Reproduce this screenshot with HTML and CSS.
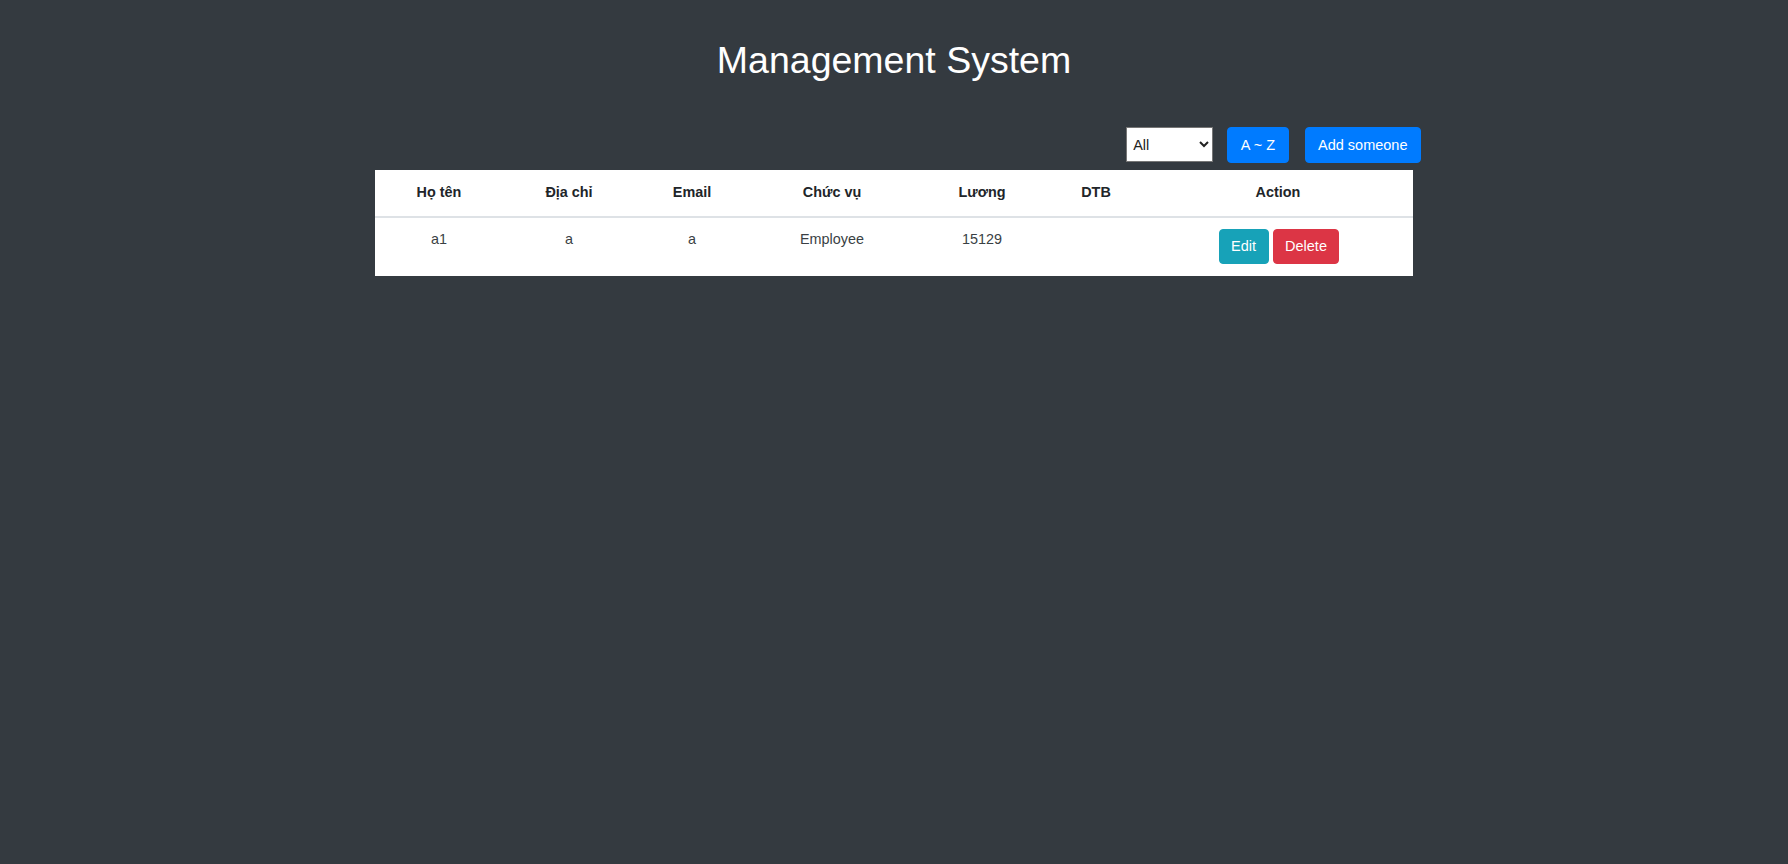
FILE: index.html
```html
<!DOCTYPE html>
<html lang="vi">
<head>
<meta charset="utf-8">
<title>Management System</title>
<link rel="stylesheet" href="styles.css">
</head>
<body>
  <div class="page">
    <h1 class="title">Management System</h1>
    <div class="panel">
      <div class="toolbar">
        <select class="filter">
          <option>All</option>
          <option>Employee</option>
          <option>Manager</option>
        </select>
        <button class="btn btn-primary">A ~ Z</button>
        <button class="btn btn-primary">Add someone</button>
      </div>
      <table class="staff">
        <thead>
          <tr>
            <th class="c1">Họ tên</th>
            <th class="c2">Địa chỉ</th>
            <th class="c3">Email</th>
            <th class="c4">Chức vụ</th>
            <th class="c5">Lương</th>
            <th class="c6">DTB</th>
            <th class="c7">Action</th>
          </tr>
        </thead>
        <tbody>
          <tr>
            <td>a1</td>
            <td>a</td>
            <td>a</td>
            <td>Employee</td>
            <td>15129</td>
            <td></td>
            <td>
              <div class="actions">
                <button class="btn btn-info">Edit</button>
                <button class="btn btn-danger">Delete</button>
              </div>
            </td>
          </tr>
        </tbody>
      </table>
    </div>
  </div>
</body>
</html>
```

FILE: styles.css
```css
html, body {
  margin: 0;
  padding: 0;
}

body {
  background: #343a40;
  min-height: 864px;
  font-family: "Liberation Sans", Arial, sans-serif;
  color: #212529;
}

.page {
  display: flex;
  flex-direction: column;
  align-items: center;
  padding-top: 38px;
}

.title {
  margin: 0;
  font-size: 37.5px;
  line-height: 45px;
  font-weight: 400;
  color: #ffffff;
}

.panel {
  width: 1038px;
  margin-top: 44px;
  display: flex;
  flex-direction: column;
}

.toolbar {
  display: flex;
  justify-content: flex-end;
  align-items: flex-start;
  gap: 16px;
  margin-right: -8px;
  height: 36px;
  margin-bottom: 7px;
}

.filter {
  width: 87px;
  height: 35px;
  font-family: "Liberation Sans", Arial, sans-serif;
  font-size: 14.4px;
  color: #222;
  background: #ffffff;
  border: 1px solid #767676;
  border-radius: 0;
  padding: 0 2px;
  margin: 0 -2px 0 0;
}

.btn {
  font-family: "Liberation Sans", Arial, sans-serif;
  font-size: 14.5px;
  line-height: 22px;
  height: 36px;
  padding: 0 12.5px;
  border: 1px solid transparent;
  border-radius: 4px;
  color: #ffffff;
  margin: 0;
  cursor: pointer;
}

.btn-primary {
  background: #007bff;
  border-color: #007bff;
}

.btn-info {
  background: #17a2b8;
  border-color: #17a2b8;
  height: 35px;
  padding: 0 11.5px;
}

.btn-danger {
  background: #dc3545;
  border-color: #dc3545;
  height: 35px;
  padding: 0 11.5px;
}

.staff {
  width: 1038px;
  border-collapse: collapse;
  background: #ffffff;
  table-layout: fixed;
  font-size: 14.4px;
  line-height: 21.6px;
}

.staff th {
  font-weight: 700;
  text-align: center;
  padding: 12px 8px 12px;
  border-bottom: 2px solid #dee2e6;
  color: #212529;
}

.staff td {
  text-align: center;
  vertical-align: top;
  padding: 11.5px 8px 12px;
  color: #3a3f44;
}

.c1 { width: 112px; }
.c2 { width: 116px; }
.c3 { width: 98px; }
.c4 { width: 150px; }
.c5 { width: 118px; }
.c6 { width: 78px; }
.c7 { width: 254px; }

.staff td .actions {
  display: flex;
  justify-content: center;
  gap: 4px;
  margin-left: 2px;
  margin-top: -0.5px;
}
```
